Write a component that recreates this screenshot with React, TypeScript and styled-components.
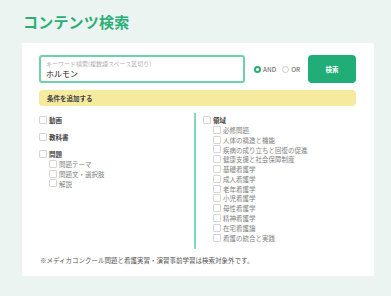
import React, { useState } from 'react'
import styled, { createGlobalStyle } from 'styled-components'

const GlobalStyle = createGlobalStyle`
  html, body {
    margin: 0;
    padding: 0;
    background: #ecf4f1;
    font-family: "Noto Sans CJK JP", "Noto Sans", sans-serif;
  }
`

const Page = styled.div`
  width: 391px;
  height: 296px;
  padding: 14px 17px 0 22px;
  box-sizing: border-box;
`

const Title = styled.h1`
  margin: 0 0 13px 1px;
  font-size: 15px;
  line-height: 16px;
  font-weight: 700;
  color: #2aae78;
  letter-spacing: 0.2px;
`

const Panel = styled.div`
  background: #fff;
  height: 233px;
  padding: 12px 18px 0 17px;
  box-sizing: border-box;
`

const SearchRow = styled.div`
  display: flex;
  align-items: center;
  height: 28px;
`

const InputBox = styled.div`
  width: 206px;
  height: 28px;
  box-sizing: border-box;
  border: 2px solid #6fd1aa;
  border-radius: 3px;
  padding: 3px 5px 0;
  display: flex;
  flex-direction: column;
`

const InputLabel = styled.span`
  font-size: 6px;
  line-height: 8px;
  color: #b0b0b0;
`

const InputValue = styled.span`
  font-size: 8px;
  line-height: 11px;
  color: #222;
`

const RadioGroup = styled.div`
  display: flex;
  align-items: center;
  margin-left: 9px;
  gap: 6px;
`

const RadioLabel = styled.label`
  display: flex;
  align-items: center;
  gap: 2px;
  font-size: 6.5px;
  color: #555;
  cursor: pointer;
`

const RadioDot = styled.span<{ $on: boolean }>`
  width: 7px;
  height: 7px;
  border-radius: 50%;
  box-sizing: border-box;
  border: ${(p) => (p.$on ? '2px solid #2aae78' : '1px solid #ccc')};
  background: #fff;
`

const SearchButton = styled.button`
  margin-left: auto;
  width: 48px;
  height: 28px;
  border: none;
  border-radius: 4px;
  background: #20ad77;
  color: #fff;
  font-family: inherit;
  font-size: 6.5px;
  font-weight: 700;
`

const ConditionBar = styled.div`
  margin-top: 7px;
  height: 16px;
  border-radius: 4px;
  background: #f6ea9f;
  padding-left: 8px;
  display: flex;
  align-items: center;
  font-size: 6.5px;
  font-weight: 700;
  color: #444;
`

const Columns = styled.div`
  margin-top: 7px;
  display: grid;
  grid-template-columns: 155px 1fr;
  height: 136px;
`

const LeftCol = styled.div`
  display: flex;
  flex-direction: column;
  padding-top: 2px;
  gap: 7px;
`

const RightCol = styled.div`
  border-left: 2px solid #7fdcb9;
  padding: 2px 0 0 7px;
`

const Group = styled.div``

const Item = styled.div<{ $sub?: boolean }>`
  display: flex;
  align-items: center;
  height: ${(p) => (p.$sub ? '9.8px' : '10px')};
  padding-left: ${(p) => (p.$sub ? '10px' : '0')};
  gap: 2px;
  font-size: 6.5px;
  font-weight: ${(p) => (p.$sub ? 400 : 700)};
  color: ${(p) => (p.$sub ? '#808080' : '#444')};
  white-space: nowrap;
`

const Box = styled.span`
  width: 8px;
  height: 8px;
  box-sizing: border-box;
  border: 1px solid #d6d6d6;
  border-radius: 1px;
  background: #fff;
  flex-shrink: 0;
`

const Note = styled.p`
  margin: 6px 0 0 1px;
  font-size: 6.5px;
  line-height: 10px;
  color: #555;
`

const fields = [
  '必修問題',
  '人体の構造と機能',
  '疾病の成り立ちと回復の促進',
  '健康支援と社会保障制度',
  '基礎看護学',
  '成人看護学',
  '老年看護学',
  '小児看護学',
  '母性看護学',
  '精神看護学',
  '在宅看護論',
  '看護の統合と実践',
]

const Check = ({ label, sub }: { label: string; sub?: boolean }) => (
  <Item $sub={sub}>
    <Box />
    {label}
  </Item>
)

const App = () => {
  const [mode, setMode] = useState<'and' | 'or'>('and')

  return (
    <>
      <GlobalStyle />
      <Page>
        <Title>コンテンツ検索</Title>
        <Panel>
          <SearchRow>
            <InputBox>
              <InputLabel>キーワード検索(複数語スペース区切り)</InputLabel>
              <InputValue>ホルモン</InputValue>
            </InputBox>
            <RadioGroup>
              <RadioLabel onClick={() => setMode('and')}>
                <RadioDot $on={mode === 'and'} />
                AND
              </RadioLabel>
              <RadioLabel onClick={() => setMode('or')}>
                <RadioDot $on={mode === 'or'} />
                OR
              </RadioLabel>
            </RadioGroup>
            <SearchButton>検索</SearchButton>
          </SearchRow>
          <ConditionBar>条件を追加する</ConditionBar>
          <Columns>
            <LeftCol>
              <Check label="動画" />
              <Check label="教科書" />
              <Group>
                <Check label="問題" />
                <Check label="問題テーマ" sub />
                <Check label="問題文・選択肢" sub />
                <Check label="解説" sub />
              </Group>
            </LeftCol>
            <RightCol>
              <Check label="領域" />
              {fields.map((f) => (
                <Check key={f} label={f} sub />
              ))}
            </RightCol>
          </Columns>
          <Note>※メディカコンクール問題と看護実習・演習事前学習は検索対象外です。</Note>
        </Panel>
      </Page>
    </>
  )
}

export default App
